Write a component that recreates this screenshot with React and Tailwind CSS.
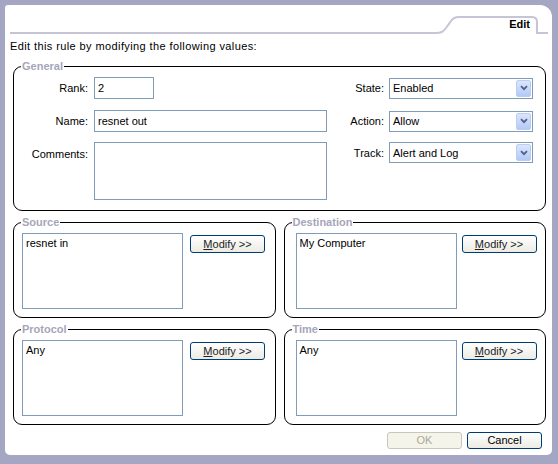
const inputBox = 'border border-[#7f9db9] bg-white';

function Select({ value }) {
  return (
    <div className={`${inputBox} flex h-[21px] w-[144px] items-center pl-[3px] pr-[1px]`}>
      <span className="flex-1 leading-[14px]">{value}</span>
      <span className="flex h-[17px] w-[15px] items-center justify-center rounded-[2px] border border-[#bccdf4] bg-gradient-to-b from-[#dbe6fd] to-[#b4c9f6]">
        <svg width="8" height="6" viewBox="0 0 8 6">
          <path d="M1 1.2 L4 4.2 L7 1.2" fill="none" stroke="#4d6185" strokeWidth="1.8" />
        </svg>
      </span>
    </div>
  );
}

function XpButton({ children, disabled }) {
  return (
    <div
      className={
        disabled
          ? 'flex h-[17px] w-[75px] items-center justify-center rounded-[3px] border border-[#c9c7ba] bg-[#f5f4ea] text-[#aca899]'
          : 'flex h-[17px] w-[75px] items-center justify-center rounded-[3px] border border-[#003c74] bg-gradient-to-b from-white to-[#ecebe3] text-black'
      }
    >
      {children}
    </div>
  );
}

function Modify() {
  return (
    <div className="flex h-[18px] w-[75px] items-center justify-center rounded-[3px] border border-[#003c74] bg-gradient-to-b from-white to-[#ecebe3] text-[#222]">
      <span>
        <span className="underline">M</span>odify &gt;&gt;
      </span>
    </div>
  );
}

function Group({ title, value, padClass, gapClass }) {
  return (
    <fieldset className="h-[102px] rounded-[9px] border border-black p-0">
      <legend className="ml-[7px] px-[1px] font-bold leading-[13px] text-[#a6a6ba]">{title}</legend>
      <div className={`flex items-start pt-[4px] ${padClass}`}>
        <div className={`${inputBox} h-[76px] w-[161px] pl-[3px] pt-[2px] leading-[14px]`}>{value}</div>
        <div className={`mt-[2px] ${gapClass}`}>
          <Modify />
        </div>
      </div>
    </fieldset>
  );
}

export default function App() {
  return (
    <div className="h-[464px] w-[558px] bg-[#a5a6c3] pb-[9px] pl-[5px] pr-[6px] pt-[5px] font-['Liberation_Sans',Arial,sans-serif] text-[11px] text-black">
      <div className="flex h-full flex-col rounded-b-[5px] rounded-tl-[3px] rounded-tr-[12px] bg-white">
        {/* Tab header */}
        <div className="relative h-[30px]">
          <svg width="547" height="30" className="block">
            <path
              d="M5 28 H431 C436 28 438 27 441 23 L446 16 C448 13 450 12 454 12 H527 C530 12 532 14 532 17 V28 H543"
              fill="none"
              stroke="#c5c5d5"
              strokeWidth="2"
            />
          </svg>
          <span className="absolute right-[22px] top-[12px] font-bold leading-[14px]">Edit</span>
        </div>

        <p className="ml-[5px] mt-[4px] leading-[14px] tracking-[0.4px]">Edit this rule by modifying the following values:</p>

        {/* General */}
        <fieldset className="ml-[8px] mr-[6px] mt-[7px] h-[151px] rounded-[9px] border border-black p-0">
          <legend className="ml-[7px] px-[1px] font-bold leading-[13px] text-[#a6a6ba]">General</legend>
          <div className="flex flex-col pt-[4px]">
            <div className="flex h-[22px] items-center">
              <span className="w-[74px] text-right">Rank:</span>
              <div className={`${inputBox} ml-[6px] flex h-[22px] w-[60px] items-center pl-[3px]`}>2</div>
              <span className="ml-auto">State:</span>
              <div className="ml-[5px] mr-[12px]">
                <Select value="Enabled" />
              </div>
            </div>
            <div className="mt-[11px] flex h-[22px] items-center">
              <span className="w-[74px] text-right">Name:</span>
              <div className={`${inputBox} ml-[6px] flex h-[22px] w-[233px] items-center pl-[3px]`}>resnet out</div>
              <span className="ml-auto">Action:</span>
              <div className="ml-[5px] mr-[12px]">
                <Select value="Allow" />
              </div>
            </div>
            <div className="mt-[10px] flex items-start">
              <span className="mt-[5px] w-[74px] text-right leading-[14px]">Comments:</span>
              <div className={`${inputBox} ml-[6px] h-[58px] w-[233px]`} />
              <span className="ml-auto mt-[4px] leading-[14px]">Track:</span>
              <div className="ml-[5px] mr-[12px]">
                <Select value="Alert and Log" />
              </div>
            </div>
          </div>
        </fieldset>

        {/* Source / Destination / Protocol / Time */}
        <div className="ml-[8px] mr-[6px] mt-[5px] grid grid-cols-2 gap-x-[8px] gap-y-[5px]">
          <Group title="Source" value="resnet in" padClass="pl-[8px]" gapClass="ml-[7px]" />
          <Group title="Destination" value="My Computer" padClass="pl-[11px]" gapClass="ml-[5px]" />
          <Group title="Protocol" value="Any" padClass="pl-[8px]" gapClass="ml-[7px]" />
          <Group title="Time" value="Any" padClass="pl-[11px]" gapClass="ml-[5px]" />
        </div>

        <div className="mr-[10px] mt-[7px] flex justify-end gap-[5px]">
          <XpButton disabled>OK</XpButton>
          <XpButton>Cancel</XpButton>
        </div>
      </div>
    </div>
  );
}
